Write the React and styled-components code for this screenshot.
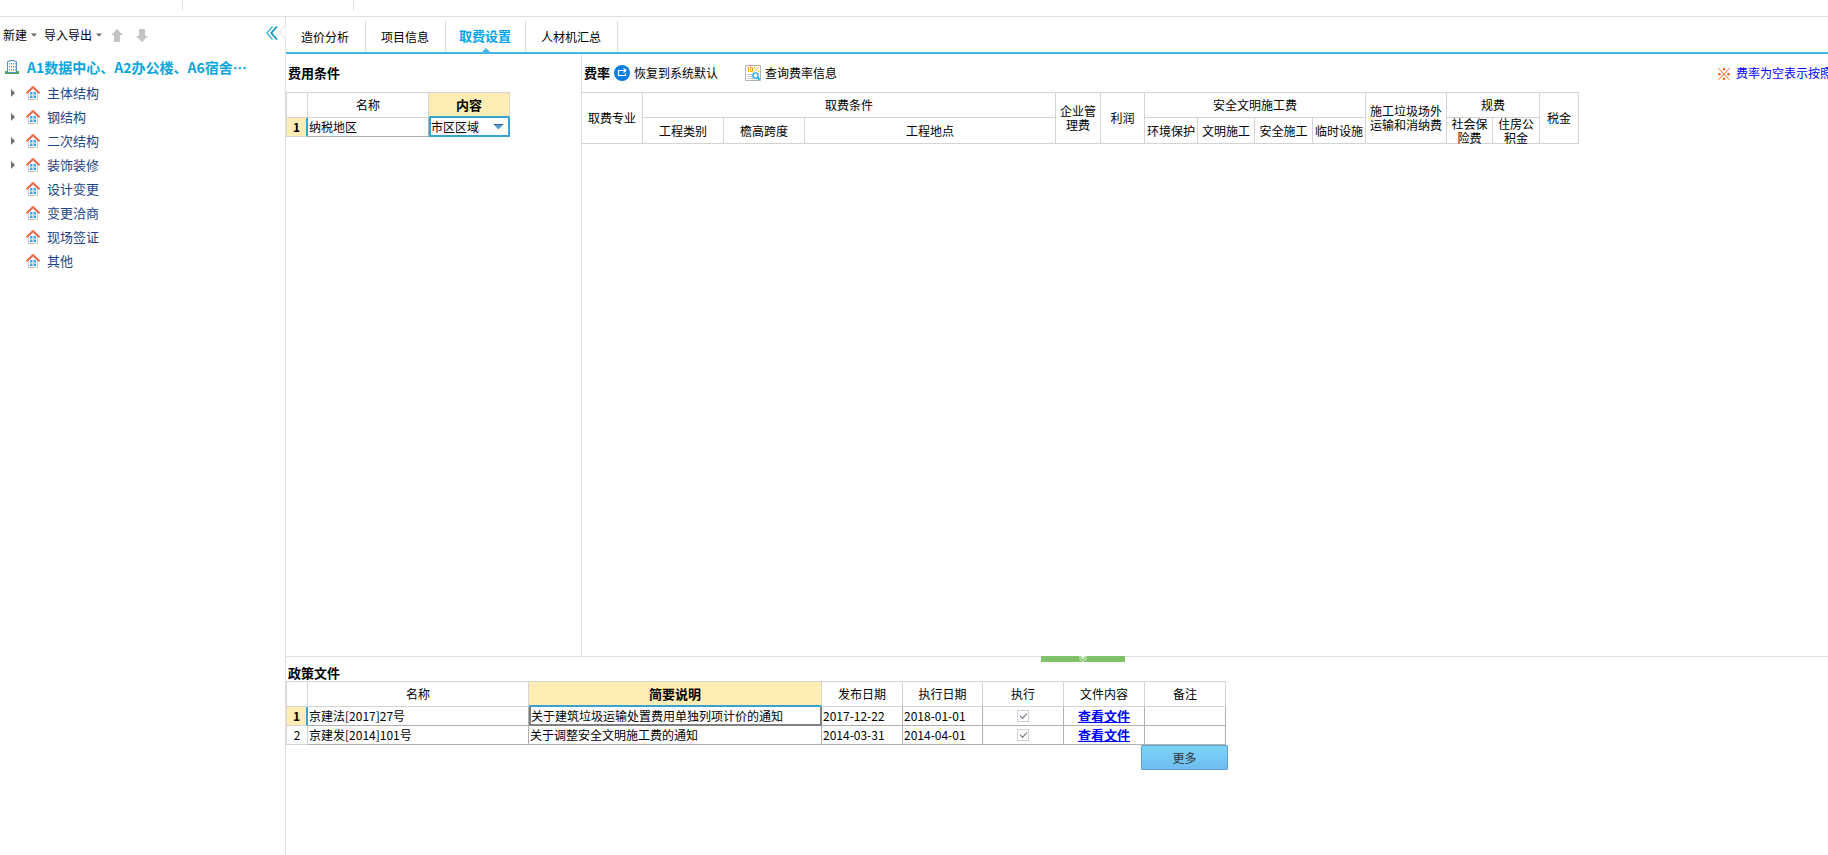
import React, { useState } from "react";
import styled, { createGlobalStyle } from "styled-components";

const TREE = [
  { name: "主体结构", branch: true },
  { name: "钢结构", branch: true },
  { name: "二次结构", branch: true },
  { name: "装饰装修", branch: true },
  { name: "设计变更" },
  { name: "变更洽商" },
  { name: "现场签证" },
  { name: "其他" },
];

const TABS = ["造价分析", "项目信息", "取费设置", "人材机汇总"];

const POLICIES = [
  {
    name: "京建法[2017]27号",
    summary: "关于建筑垃圾运输处置费用单独列项计价的通知",
    issued: "2017-12-22",
    effective: "2018-01-01",
  },
  {
    name: "京建发[2014]101号",
    summary: "关于调整安全文明施工费的通知",
    issued: "2014-03-31",
    effective: "2014-04-01",
  },
];

const RATE_COLUMNS = [61, 81, 81, 251, 45, 44, 53, 57, 58, 53, 81, 46, 47, 39];

const Caret = () => (
  <svg width="6" height="4" viewBox="0 0 6 4" aria-hidden="true">
    <path d="M0 0.5h6L3 3.8z" fill="#6b6b78" />
  </svg>
);

const MoveArrow = ({ down }) => (
  <svg width="12" height="13" viewBox="0 0 12 13" aria-hidden="true">
    <path
      d={down ? "M3 0h6v7h3L6 13 0 7h3z" : "M3 13h6V6h3L6 0 0 6h3z"}
      fill="#c3c3c3"
    />
  </svg>
);

const CollapseIcon = () => (
  <svg width="12" height="14" viewBox="0 0 12 14" fill="none" aria-hidden="true">
    <path d="M6.500 0.500L0.800 7l5.700 6.500" stroke="#2fb0e0" strokeWidth="1.200" />
    <path d="M11 0.500L5.300 7l5.700 6.500" stroke="#0f93c4" strokeWidth="1.700" />
  </svg>
);

const BuildingIcon = () => (
  <svg width="14" height="14" viewBox="0 0 14 14" aria-hidden="true">
    <path d="M0 11h3v2H0zM11 11h3v2h-3z" fill="#3db53a" />
    <path d="M2.500 12.500v-11h2v-1h5v1h2v11z" fill="#fff" stroke="#5b93c9" />
    <path
      d="M4 3h1v1.500H4zM6 3h1v1.500H6zM8 3h1v1.500H8zM4 6h1v1.500H4zM6 6h1v1.500H6zM8 6h1v1.500H8zM10 3h1v1.500h-1zM10 6h1v1.500h-1zM4 9h1v1.500H4zM6 9h1v1.500H6zM8 9h1v1.500H8zM10 9h1v1.500h-1z"
      fill="#45a2e8"
    />
    <path d="M0 13.500h14" stroke="#4f9a4c" />
  </svg>
);

const HouseIcon = () => (
  <svg width="14" height="14" viewBox="0 0 14 14" aria-hidden="true">
    <path d="M2.500 6v7.500h9V6L7 2z" fill="#fff" stroke="#cfcfcf" />
    <path
      d="M0.500 7.200L7 1l6.500 6.200"
      fill="none"
      stroke="#f0694a"
      strokeWidth="2"
    />
    <path
      d="M4 6h2.500v2.500H4zM7.500 6H10v2.500H7.500zM4 9.500h2.500V12H4zM7.500 9.500H10V12H7.500z"
      fill="#35a9ec"
    />
  </svg>
);

const RestoreIcon = () => (
  <svg width="16" height="16" viewBox="0 0 16 16" fill="none" aria-hidden="true">
    <circle cx="8" cy="8" r="8" fill="#0c7ce0" />
    <path
      d="M11.500 5.500h-7v5h7V8.500M9.500 3.500l2.500 2-2.500 2"
      stroke="#fff"
      strokeWidth="1.200"
    />
  </svg>
);

const QueryIcon = () => (
  <svg width="16" height="16" viewBox="0 0 16 16" fill="none" aria-hidden="true">
    <path d="M0.500 0.500h15v15H0.500z" fill="#fff" stroke="#b4b4b4" />
    <path
      d="M3.500 2v5M5.500 2.500h2v4h-2zM9.500 6.500l4-4M9.500 2v1.500M13.500 5.500V7"
      stroke="#f5a623"
    />
    <path d="M2 9.500h5M2 11.500h5M2 13.500h6" stroke="#c9c9c9" />
    <circle cx="10.500" cy="10.500" r="2.700" fill="#fff" stroke="#2f9be0" strokeWidth="1.300" />
    <path d="M12.500 12.500l2.300 2.500" stroke="#1cc4f5" strokeWidth="2" />
  </svg>
);

const RateHead = ({ children, tight, ...rest }) => (
  <HeadCell {...rest}>
    <HeadText $tight={tight}>{children}</HeadText>
  </HeadCell>
);

const Sidebar = () => (
  <Side>
    <SideToolbar>
      <ToolButton>
        新建
        <Caret />
      </ToolButton>
      <ToolButton>
        导入导出
        <Caret />
      </ToolButton>
      <MoveButtons>
        <ToolButton aria-label="上移">
          <MoveArrow />
        </ToolButton>
        <ToolButton aria-label="下移">
          <MoveArrow down />
        </ToolButton>
      </MoveButtons>
      <CollapseButton aria-label="收起">
        <CollapseIcon />
      </CollapseButton>
    </SideToolbar>
    <Notch width="7" height="14" viewBox="0 0 7 14" aria-hidden="true">
      <path d="M6.500 0L0.500 7l6 7" fill="#fff" stroke="#dcdcdc" />
    </Notch>
    <Project>
      <BuildingIcon />
      <span>A1数据中心、A2办公楼、A6宿舍⋯</span>
    </Project>
    <Tree>
      {TREE.map((node) => (
        <TreeItem key={node.name}>
          <Twisty>
            {node.branch && (
              <svg width="4" height="8" viewBox="0 0 4 8" aria-hidden="true">
                <path d="M0 0l4 4-4 4z" fill="#707070" />
              </svg>
            )}
          </Twisty>
          <HouseIcon />
          <span>{node.name}</span>
        </TreeItem>
      ))}
    </Tree>
  </Side>
);

const CostConditions = () => (
  <ConditionsPanel>
    <PanelBar>
      <PanelTitle>费用条件</PanelTitle>
    </PanelBar>
    <Table $left>
      <colgroup>
        <Col $w={21} />
        <Col $w={121} />
        <Col $w={81} />
      </colgroup>
      <thead>
        <tr>
          <HeadCell />
          <HeadCell>名称</HeadCell>
          <HeadCell $active>内容</HeadCell>
        </tr>
      </thead>
      <tbody>
        <tr>
          <IndexCell $active>1</IndexCell>
          <Cell>
            <label htmlFor="tax-area">纳税地区</label>
          </Cell>
          <Cell $focus="#38a3cf">
            <SelectWrap>
              <Select id="tax-area" defaultValue="市区区域">
                <option>市区区域</option>
              </Select>
              <svg width="9" height="6" viewBox="0 0 9 6" aria-hidden="true">
                <path d="M0 0h9v1L4.500 5.500 0 1z" fill="#5a9ed0" />
                <path d="M0 0.500h9" stroke="#36679a" />
              </svg>
            </SelectWrap>
          </Cell>
        </tr>
      </tbody>
    </Table>
  </ConditionsPanel>
);

const Rates = () => (
  <RatesPanel>
    <PanelBar>
      <PanelTitle>费率</PanelTitle>
      <BarButton>
        <RestoreIcon />
        恢复到系统默认
      </BarButton>
      <BarButton $apart>
        <QueryIcon />
        查询费率信息
      </BarButton>
      <Note>
        <NoteMark>※</NoteMark>
        <span>费率为空表示按照</span>
      </Note>
    </PanelBar>
    <Table>
      <colgroup>
        {RATE_COLUMNS.map((w, i) => (
          <Col key={i} $w={w} />
        ))}
      </colgroup>
      <thead>
        <tr>
          <RateHead rowSpan={2}>取费专业</RateHead>
          <RateHead colSpan={3}>取费条件</RateHead>
          <RateHead rowSpan={2}>企业管理费</RateHead>
          <RateHead rowSpan={2}>利润</RateHead>
          <RateHead colSpan={4}>安全文明施工费</RateHead>
          <RateHead rowSpan={2}>施工垃圾场外运输和消纳费</RateHead>
          <RateHead colSpan={2}>规费</RateHead>
          <RateHead rowSpan={2}>税金</RateHead>
        </tr>
        <tr>
          <RateHead tight>工程类别</RateHead>
          <RateHead tight>檐高跨度</RateHead>
          <RateHead tight>工程地点</RateHead>
          <RateHead tight>环境保护</RateHead>
          <RateHead tight>文明施工</RateHead>
          <RateHead tight>安全施工</RateHead>
          <RateHead tight>临时设施</RateHead>
          <RateHead tight>社会保险费</RateHead>
          <RateHead tight>住房公积金</RateHead>
        </tr>
      </thead>
    </Table>
  </RatesPanel>
);

const Policies = () => (
  <PolicyPanel>
    <SplitHandle aria-label="收起政策文件">
      <svg width="10" height="6" viewBox="0 0 10 6" fill="none" aria-hidden="true">
        <path d="M3 0h4L5 2z" fill="#fff" />
        <path d="M1 0l4 3 4-3M1 2.500l4 3 4-3" stroke="#e2f3dc" />
      </svg>
    </SplitHandle>
    <PolicyTitle>政策文件</PolicyTitle>
    <PolicyBody>
      <Table $left>
        <colgroup>
          <Col $w={21} />
          <Col $w={221} />
          <Col $w={293} />
          <Col $w={81} />
          <Col $w={80} />
          <Col $w={81} />
          <Col $w={81} />
          <Col $w={81} />
        </colgroup>
        <thead>
          <tr>
            <HeadCell />
            <HeadCell>名称</HeadCell>
            <HeadCell $active>简要说明</HeadCell>
            <HeadCell>发布日期</HeadCell>
            <HeadCell>执行日期</HeadCell>
            <HeadCell>执行</HeadCell>
            <HeadCell>文件内容</HeadCell>
            <HeadCell>备注</HeadCell>
          </tr>
        </thead>
        <tbody>
          {POLICIES.map((row, i) => (
            <tr key={row.name}>
              <IndexCell $active={i === 0}>{i + 1}</IndexCell>
              <Cell>{row.name}</Cell>
              <Cell $focus={i === 0 ? "#808080" : undefined}>{row.summary}</Cell>
              <Cell>{row.issued}</Cell>
              <Cell>{row.effective}</Cell>
              <Cell $center>
                <Check
                  type="checkbox"
                  defaultChecked
                  aria-label={`执行 ${row.name}`}
                />
              </Cell>
              <Cell $center>
                <FileLink href="#file">查看文件</FileLink>
              </Cell>
              <Cell />
            </tr>
          ))}
        </tbody>
      </Table>
      <MoreButton>更多</MoreButton>
    </PolicyBody>
  </PolicyPanel>
);

const App = () => {
  const [active, setActive] = useState("取费设置");

  return (
    <Page>
      <GlobalStyle />
      <Ribbon>
        <RibbonGroup $w={183} />
        <RibbonGroup $w={171} />
      </Ribbon>
      <Body>
        <Sidebar />
        <Main>
          <Tabs>
            {TABS.map((tab) => (
              <Tab
                key={tab}
                $active={tab === active}
                onClick={() => setActive(tab)}
              >
                {tab}
              </Tab>
            ))}
          </Tabs>
          <Upper>
            <CostConditions />
            <Rates />
          </Upper>
          <Policies />
        </Main>
      </Body>
    </Page>
  );
};

export default App;

const GlobalStyle = createGlobalStyle`
  *, *::before, *::after {
    box-sizing: border-box;
  }

  body {
    margin: 0;
    overflow: hidden;
    background: #fff;
  }

  body, button, select {
    font-family: "Noto Sans CJK SC", sans-serif;
    font-size: 12px;
    line-height: 16px;
    color: #000;
  }

  button {
    padding: 0;
    border: 0;
    background: none;
    white-space: nowrap;
  }

  svg {
    display: block;
    flex: none;
  }
`;

const Page = styled.div`
  display: flex;
  flex-direction: column;
  height: 100vh;
`;

const Ribbon = styled.div`
  display: flex;
  flex: none;
  height: 17px;
  padding-bottom: 5px;
  border-bottom: 1px solid #e0e0e0;
`;

const RibbonGroup = styled.div`
  width: ${(p) => p.$w}px;
  border-right: 1px solid #e0e0e0;
`;

const Body = styled.div`
  display: flex;
  flex: 1;
  min-height: 0;
`;

const Side = styled.aside`
  position: relative;
  flex: none;
  width: 286px;
  border-right: 1px solid #e0e0e0;
`;

const SideToolbar = styled.div`
  display: flex;
  align-items: center;
  gap: 7px;
  height: 36px;
  padding: 0 7px 0 3px;
`;

const ToolButton = styled.button`
  display: flex;
  align-items: center;
  gap: 4px;
`;

const MoveButtons = styled.div`
  display: flex;
  gap: 13px;
  padding-left: 2px;
`;

const CollapseButton = styled.button`
  align-self: flex-start;
  margin-left: auto;
  padding-top: 9px;
`;

/* sits over the divider and points at the collapse button */
const Notch = styled.svg`
  position: absolute;
  top: 8px;
  right: -1px;
`;

const Project = styled.div`
  display: flex;
  align-items: center;
  gap: 8px;
  height: 28px;
  padding-left: 5px;
  font-size: 14px;
  font-weight: bold;
  white-space: nowrap;
  color: #0aa5dc;
`;

const Tree = styled.ul`
  margin: 0;
  padding: 0;
  list-style: none;
`;

const TreeItem = styled.li`
  display: flex;
  align-items: center;
  height: 24px;
  padding-left: 11px;
  font-size: 13px;
  color: #1c4587;

  span:last-child {
    margin-left: 7px;
  }
`;

const Twisty = styled.span`
  width: 15px;
`;

const Main = styled.main`
  display: flex;
  flex: 1;
  flex-direction: column;
  min-width: 0;
`;

const Tabs = styled.nav`
  display: flex;
  flex: none;
  height: 37px;
  padding-top: 4px;
  border-bottom: 2px solid #45b6e3;
`;

const Tab = styled.button`
  position: relative;
  padding: 0 16px 0 15px;
  border-right: 1px solid #dcdcdc;
  font-size: ${(p) => (p.$active ? 13 : 12)}px;
  font-weight: ${(p) => (p.$active ? "bold" : "normal")};
  color: ${(p) => (p.$active ? "#00a3ee" : "#000")};

  ${(p) =>
    p.$active &&
    `
    padding: 0 14px 2px 13px;

    &::after {
      content: "";
      position: absolute;
      bottom: 0;
      left: 50%;
      margin-left: -4px;
      border: 4px solid transparent;
      border-top: 0;
      border-bottom-color: #45b6e3;
    }
  `}
`;

const Upper = styled.div`
  display: flex;
  flex: 1;
  min-height: 0;
`;

const ConditionsPanel = styled.section`
  flex: none;
  width: 296px;
  border-right: 1px solid #e0e0e0;
`;

const RatesPanel = styled.section`
  flex: 1;
  min-width: 0;
`;

const PanelBar = styled.div`
  display: flex;
  align-items: center;
  height: 38px;
  padding-left: 2px;
`;

const PanelTitle = styled.h2`
  flex: none;
  margin: 0;
  font-size: 13px;
  font-weight: bold;
`;

const BarButton = styled.button`
  display: flex;
  flex: none;
  align-items: center;
  gap: 4px;
  margin-left: ${(p) => (p.$apart ? 27 : 4)}px;
`;

/* the sentence runs on past the right edge of the window */
const Note = styled.p`
  display: flex;
  flex: none;
  gap: 4px;
  width: 112px;
  margin: 0 0 0 auto;
  white-space: nowrap;
  color: #0000ff;
`;

const NoteMark = styled.span`
  font-size: 16px;
  color: #ff5a00;
`;

const Table = styled.table`
  width: 0;
  table-layout: fixed;
  border-spacing: 0;
  border-top: 1px solid #d4d4d4;
  border-left: ${(p) => (p.$left ? "1px solid #d4d4d4" : "0")};
  min-width: max-content;
`;

const Col = styled.col`
  width: ${(p) => p.$w}px;
`;

const HeadCell = styled.th`
  height: 25px;
  padding: 0;
  border-right: 1px solid #d4d4d4;
  border-bottom: ${(p) => (p.$active ? "2px solid #38a3cf" : "1px solid #d4d4d4")};
  font-size: ${(p) => (p.$active ? 13 : 12)}px;
  font-weight: ${(p) => (p.$active ? "bold" : "normal")};
  line-height: 16px;
  background: ${(p) => (p.$active ? "#ffedb5" : "#fff")};
`;

const HeadText = styled.div`
  display: flex;
  align-items: center;
  justify-content: center;
  height: ${(p) => (p.$tight ? 25 : 24)}px;
  padding: 0 2px;
  line-height: 14px;
`;

const Cell = styled.td`
  height: 19px;
  padding: 0 1px;
  border-right: 1px solid #b0b0b0;
  border-bottom: 1px solid #b0b0b0;
  text-align: ${(p) => (p.$center ? "center" : "left")};
  white-space: nowrap;

  ${(p) =>
    p.$focus &&
    `
    padding: 0;
    border: 2px solid ${p.$focus};
    border-top: 0;
  `}
`;

const IndexCell = styled.td`
  height: 19px;
  padding: 0;
  border-right: ${(p) => (p.$active ? "2px solid #38a3cf" : "1px solid #d4d4d4")};
  border-bottom: 1px solid #d4d4d4;
  font-weight: ${(p) => (p.$active ? "bold" : "normal")};
  text-align: center;
  background: ${(p) => (p.$active ? "#ffedb5" : "#fff")};
`;

const SelectWrap = styled.div`
  display: flex;
  align-items: center;
  height: 16px;
  padding-right: 5px;
`;

const Select = styled.select`
  flex: 1;
  min-width: 0;
  height: 16px;
  padding: 0;
  border: 0;
  appearance: none;
  background: none;
`;

const PolicyPanel = styled.section`
  position: relative;
  flex: none;
  height: 199px;
  border-top: 1px solid #e0e0e0;
`;

const SplitHandle = styled.button`
  position: absolute;
  top: -1px;
  left: 49%;
  display: flex;
  justify-content: center;
  width: 84px;
  height: 6px;
  margin-left: -1px;
  background: #80c269;
`;

const PolicyTitle = styled(PanelTitle)`
  height: 24px;
  padding: 8px 0 0 2px;
`;

const PolicyBody = styled.div`
  display: flex;
  flex-direction: column;
  align-items: flex-end;
  width: max-content;
`;

const Check = styled.input`
  display: block;
  width: 12px;
  height: 12px;
  margin: 0 auto;
  border: 1px solid #d0d0d0;
  appearance: none;
  background: #fff;

  &:checked::after {
    content: "";
    display: block;
    width: 7px;
    height: 4px;
    margin: 2px 0 0 2px;
    border: solid #6a6a80;
    border-width: 0 0 1px 1px;
    transform: rotate(-45deg);
  }
`;

const FileLink = styled.a`
  font-size: 13px;
  font-weight: bold;
  color: #0000ff;
`;

const MoreButton = styled.button`
  width: 87px;
  height: 25px;
  margin-right: -2px;
  border: 1px solid #5b9fdc;
  border-radius: 1px;
  color: #333;
  background: linear-gradient(#7dd3f8, #6dbdf0);
`;
